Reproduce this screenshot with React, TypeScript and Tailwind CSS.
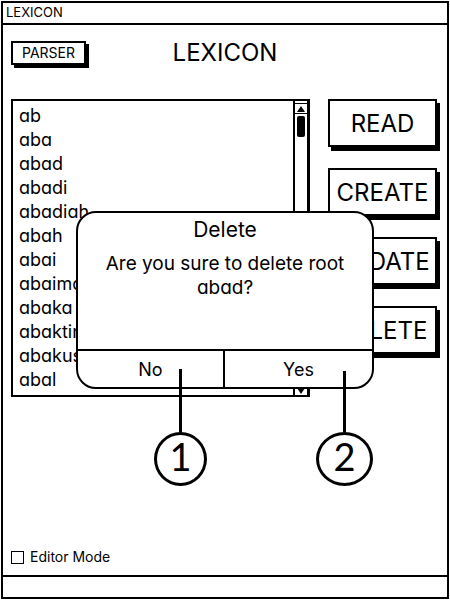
import React from "react";

const roots = [
  "ab", "aba", "abad", "abadi", "abadiah", "abah",
  "abai", "abaimah", "abaka", "abaktin", "abakus", "abal",
];

const actions = ["READ", "CREATE", "UPDATE", "DELETE"];

function ActionButton({ label }: { label: string }) {
  return (
    <button
      type="button"
      className="flex h-12 w-full items-center justify-center border-2 border-black bg-white pt-[2px] text-2xl leading-none shadow-[3px_4px_0_0_#000]"
    >
      {label}
    </button>
  );
}

function Scrollbar() {
  return (
    <div className="flex w-[14px] flex-col items-center justify-between border-l-2 border-black pt-[2px]" aria-hidden="true">
      <div className="flex w-full flex-col items-center gap-[2px]">
        <div className="flex h-[11px] w-full items-center justify-center border-y border-black">
          <svg viewBox="0 0 8 6" className="h-[6px] w-2">
            <path d="M4 0L8 6H0Z" />
          </svg>
        </div>
        <div className="h-[21px] w-2 rounded-[2px] bg-black" />
      </div>
      <div className="flex h-[11px] w-full items-center justify-center border-t-2 border-black">
        <svg viewBox="0 0 8 6" className="h-[6px] w-2">
          <path d="M0 0H8L4 6Z" />
        </svg>
      </div>
    </div>
  );
}

function RootList() {
  return (
    <div className="flex h-[298px] min-w-0 flex-1 border-2 border-r-3 border-black">
      <ul className="flex-1 pt-[3px] pl-[6px] text-lg leading-6">
        {roots.map((root) => (
          <li key={root}>{root}</li>
        ))}
      </ul>
      <Scrollbar />
    </div>
  );
}

function Callout({ value, className }: { value: string; className: string }) {
  return (
    <div className={`pointer-events-none absolute flex flex-col items-center ${className}`}>
      <div className="w-[3px] flex-1 bg-black" />
      <div className="flex h-[54px] w-full items-center justify-center rounded-[50%] border-3 border-black bg-white pb-[6px] font-[Lato,sans-serif] text-[38px] leading-none">
        {value}
      </div>
    </div>
  );
}

function DeleteDialog() {
  return (
    <div
      role="dialog"
      aria-labelledby="dialog-title"
      className="absolute top-28 left-1/2 flex h-[178px] w-[298px] -translate-x-1/2 flex-col rounded-[20px] border-2 border-black bg-white text-lg leading-6"
    >
      <div className="flex-1 pt-[5px] text-center">
        <h2 id="dialog-title" className="text-[21px] leading-6">Delete</h2>
        <p className="px-4 pt-[10px] text-[19px]">Are you sure to delete root abad?</p>
      </div>
      <div className="grid h-[38px] grid-cols-2 border-t-2 border-black">
        <button type="button" className="border-r-2 border-black pt-[2px]">No</button>
        <button type="button" className="pt-[2px]">Yes</button>
      </div>
      <Callout value="1" className="top-[156px] left-[76px] h-[117px] w-[53px]" />
      <Callout value="2" className="top-[158px] left-[238px] h-[115px] w-[57px]" />
    </div>
  );
}

export default function App() {
  return (
    <div className="flex min-h-screen bg-white p-px font-[Inter,sans-serif] text-black [font-feature-settings:'cv11']">
      <div className="flex flex-1 flex-col border-2 border-black">
        <header className="h-[22px] border-b-2 border-black pl-[3px] text-[13px] leading-[19px]">LEXICON</header>
        <main className="flex flex-1 flex-col px-2 pt-4 pb-2">
          <div className="grid grid-cols-[1fr_auto_1fr] items-start">
            <button
              type="button"
              className="h-6 w-[75px] border-2 border-black bg-white text-sm leading-none shadow-[3px_3px_0_0_#000]"
            >
              PARSER
            </button>
            <h1 className="text-2xl leading-6">LEXICON</h1>
          </div>
          <section className="relative mt-[34px] flex gap-[18px] pr-[2px]">
            <RootList />
            <div className="flex w-[109px] flex-col gap-[21px]">
              {actions.map((action) => (
                <ActionButton key={action} label={action} />
              ))}
            </div>
            <DeleteDialog />
          </section>
          <label className="mt-auto flex items-center gap-[6px] text-sm leading-5">
            <input type="checkbox" className="size-[13px] appearance-none border border-black bg-white checked:bg-black" />
            Editor Mode
          </label>
        </main>
        <footer className="h-[22px] border-t-2 border-black" />
      </div>
    </div>
  );
}
